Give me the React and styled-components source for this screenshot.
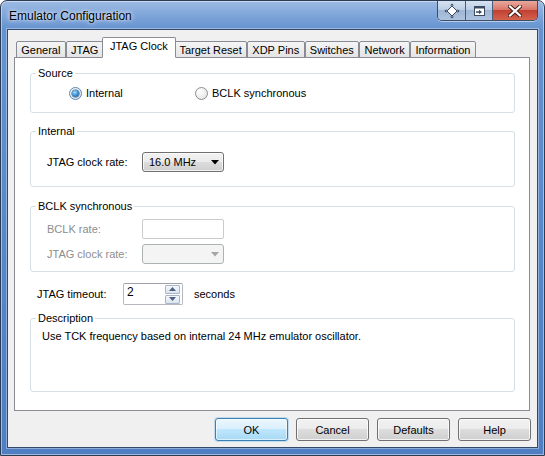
import React from "react";
import styled, { createGlobalStyle, css } from "styled-components";

const GlobalStyle = createGlobalStyle`
  html, body {
    margin: 0;
    padding: 0;
    background: #ffffff;
  }

  body {
    font-family: "Liberation Sans", Arial, sans-serif;
    font-size: 11px;
    color: #000;
  }

  * {
    box-sizing: border-box;
  }
`;

const TABS = [
  "General",
  "JTAG",
  "JTAG Clock",
  "Target Reset",
  "XDP Pins",
  "Switches",
  "Network",
  "Information",
];

function MoveIcon() {
  return (
    <svg width="16" height="16" viewBox="0 0 16 16">
      <path d="M8 3 L13 8 L8 13 L3 8 Z" fill="#fff" stroke="#3a4a60" strokeWidth="1" />
      <path d="M8 0.5 L10 2.5 L6 2.5 Z" fill="#3a4a60" />
      <path d="M8 15.5 L10 13.5 L6 13.5 Z" fill="#3a4a60" />
      <path d="M0.5 8 L2.5 6 L2.5 10 Z" fill="#3a4a60" />
      <path d="M15.5 8 L13.5 6 L13.5 10 Z" fill="#3a4a60" />
    </svg>
  );
}

function DockIcon() {
  return (
    <svg width="14" height="12" viewBox="0 0 14 12">
      <rect x="2.5" y="1.5" width="10" height="9" fill="#fff" stroke="#3a4a60" />
      <rect x="2.5" y="1.5" width="10" height="2" fill="#3a4a60" />
      <path d="M4 7 H8" stroke="#3a4a60" strokeWidth="1.6" />
      <path d="M7 4.8 L10 7 L7 9.2 Z" fill="#3a4a60" />
    </svg>
  );
}

function CloseIcon() {
  return (
    <svg width="14" height="12" viewBox="0 0 14 12">
      <path
        d="M2 1.5 L12 10.5 M12 1.5 L2 10.5"
        stroke="#3b1c18"
        strokeWidth="4"
        strokeLinecap="square"
      />
      <path
        d="M2 1.5 L12 10.5 M12 1.5 L2 10.5"
        stroke="#ffffff"
        strokeWidth="2.2"
        strokeLinecap="square"
      />
    </svg>
  );
}

function DropArrow({ disabled }) {
  return (
    <svg width="8" height="5" viewBox="0 0 8 5">
      <path d="M0 0 H8 L4 4.5 Z" fill={disabled ? "#a6a6a6" : "#000"} />
    </svg>
  );
}

function SpinArrow({ up }) {
  return (
    <svg width="7" height="4" viewBox="0 0 7 4">
      <path d={up ? "M0 4 H7 L3.5 0 Z" : "M0 0 H7 L3.5 4 Z"} fill="#4d6185" />
    </svg>
  );
}

export default function App() {
  return (
    <>
      <GlobalStyle />
      <Window>
        <TitleBar>
          <Title>Emulator Configuration</Title>
          <CaptionButtons>
            <CaptionButton>
              <MoveIcon />
            </CaptionButton>
            <CaptionButton>
              <DockIcon />
            </CaptionButton>
            <CaptionButton $close>
              <CloseIcon />
            </CaptionButton>
          </CaptionButtons>
        </TitleBar>

        <Client>
          <TabStrip>
            {TABS.map((t) => (
              <Tab key={t} $active={t === "JTAG Clock"}>
                {t}
              </Tab>
            ))}
          </TabStrip>

          <Panel>
            <GroupBox>
              <Legend>Source</Legend>
              <RadioRow>
                <RadioOption>
                  <Radio $checked />
                  Internal
                </RadioOption>
                <RadioOption>
                  <Radio />
                  BCLK synchronous
                </RadioOption>
              </RadioRow>
            </GroupBox>

            <GroupBox $top={11}>
              <Legend>Internal</Legend>
              <FieldRows $pt={14} $pb={14}>
                <FieldRow>
                  <FieldLabel>JTAG clock rate:</FieldLabel>
                  <Combo>
                    <span>16.0 MHz</span>
                    <DropArrow />
                  </Combo>
                </FieldRow>
              </FieldRows>
            </GroupBox>

            <GroupBox $top={12}>
              <Legend>BCLK synchronous</Legend>
              <FieldRows $pt={6} $pb={7}>
                <FieldRow>
                  <FieldLabel $disabled>BCLK rate:</FieldLabel>
                  <EditBox $disabled />
                </FieldRow>
                <FieldRow>
                  <FieldLabel $disabled>JTAG clock rate:</FieldLabel>
                  <Combo $disabled>
                    <span />
                    <DropArrow disabled />
                  </Combo>
                </FieldRow>
              </FieldRows>
            </GroupBox>

            <TimeoutRow>
              <TimeoutLabel>JTAG timeout:</TimeoutLabel>
              <Spinner>
                <SpinValue>2</SpinValue>
                <SpinButtons>
                  <SpinButton>
                    <SpinArrow up />
                  </SpinButton>
                  <SpinButton>
                    <SpinArrow />
                  </SpinButton>
                </SpinButtons>
              </Spinner>
              <Unit>seconds</Unit>
            </TimeoutRow>

            <GroupBox $top={6}>
              <Legend>Description</Legend>
              <Description>
                Use TCK frequency based on internal 24 MHz emulator oscillator.
              </Description>
            </GroupBox>
          </Panel>

          <ButtonRow>
            <DialogButton $default>OK</DialogButton>
            <DialogButton>Cancel</DialogButton>
            <DialogButton>Defaults</DialogButton>
            <DialogButton>Help</DialogButton>
          </ButtonRow>
        </Client>
      </Window>
    </>
  );
}

const Window = styled.div`
  width: 545px;
  height: 456px;
  display: flex;
  flex-direction: column;
  padding: 0 6px 7px 6px;
  border: 1px solid #2b3c55;
  border-radius: 7px 7px 0 0;
  background: linear-gradient(
    to bottom,
    #9dbbe4 0px,
    #7fa5d9 14px,
    #6693d0 28px,
    #5686c8 60%,
    #4f7fc2 100%
  );
  box-shadow: inset 0 0 0 1px rgba(255, 255, 255, 0.45);
`;

const TitleBar = styled.div`
  height: 28px;
  display: flex;
  align-items: flex-start;
  justify-content: space-between;
`;

const Title = styled.div`
  padding: 8px 0 0 2px;
  font-size: 12px;
  color: #000;
  text-shadow: 0 0 6px rgba(255, 255, 255, 0.9), 0 0 3px rgba(255, 255, 255, 0.8);
`;

const CaptionButtons = styled.div`
  display: flex;
  margin-right: 0px;
  height: 20px;
  border: 1px solid #3d4e69;
  border-top: none;
  border-radius: 0 0 5px 5px;
  overflow: hidden;
  box-shadow: 0 1px 0 rgba(255, 255, 255, 0.5);
`;

const CaptionButton = styled.div`
  width: 27px;
  height: 100%;
  display: flex;
  align-items: center;
  justify-content: center;
  border-left: 1px solid #4a5d7c;
  background: linear-gradient(
    to bottom,
    #d6e2f1 0%,
    #bccee6 45%,
    #9fb6d5 50%,
    #aec4df 100%
  );

  &:first-child {
    border-left: none;
  }

  ${(p) =>
    p.$close &&
    css`
      width: 45px;
      background: linear-gradient(
        to bottom,
        #e9a99c 0%,
        #d9786a 45%,
        #c24132 50%,
        #d4624f 100%
      );
    `}
`;

const Client = styled.div`
  flex: 1;
  display: flex;
  flex-direction: column;
  padding: 7px 7px 0 6px;
  background: #f0f0f0;
  border: 1px solid #34486a;
  box-shadow: 0 0 0 1px rgba(255, 255, 255, 0.35);
`;

const TabStrip = styled.div`
  height: 21px;
  display: flex;
  align-items: flex-end;
  padding-left: 2px;
  margin-bottom: -1px;
  position: relative;
  z-index: 1;
`;

const Tab = styled.div`
  height: 17px;
  padding: 0 4.3px;
  display: flex;
  align-items: center;
  border: 1px solid #898c95;
  border-radius: 2px 2px 0 0;
  background: linear-gradient(to bottom, #f5f5f5, #e4e4e4);
  white-space: nowrap;

  ${(p) =>
    p.$active &&
    css`
      height: 21px;
      padding: 0 7.3px 3px;
      margin: 0 -2px;
      background: #ffffff;
      border-bottom-color: #ffffff;
      position: relative;
      z-index: 2;
    `}
`;

const Panel = styled.div`
  height: 354px;
  display: flex;
  flex-direction: column;
  padding: 8px 14px 0 15px;
  background: #ffffff;
  border: 1px solid #898c95;
`;

const GroupBox = styled.fieldset`
  margin: ${(p) => p.$top || 0}px 0 0 0;
  padding: 0;
  min-width: 0;
  border: 1px solid #d5dfe5;
  border-radius: 3px;
`;

const Legend = styled.legend`
  margin-left: 5px;
  padding: 0 2px;
  line-height: 14px;
  font-size: 11px;
`;

const RadioRow = styled.div`
  height: 26px;
  margin-bottom: 6px;
  display: flex;
  align-items: center;
  padding-left: 38px;
`;

const RadioOption = styled.label`
  width: 126px;
  display: flex;
  align-items: center;
  gap: 4px;
  white-space: nowrap;
`;

const Radio = styled.span`
  width: 13px;
  height: 13px;
  flex: none;
  border-radius: 50%;
  border: 1px solid #8e8f8f;
  background: radial-gradient(circle at 35% 30%, #ffffff 0%, #ececec 60%, #d6d6d6 100%);
  display: flex;
  align-items: center;
  justify-content: center;

  ${(p) =>
    p.$checked &&
    css`
      border-color: #5c86b0;
      &::after {
        content: "";
        width: 7px;
        height: 7px;
        border-radius: 50%;
        background: radial-gradient(
          circle at 40% 35%,
          #a9e1fb 0%,
          #3f94d4 45%,
          #17528f 100%
        );
        box-shadow: 0 0 0 0.5px #1d4f7f;
      }
    `}
`;

const FieldRows = styled.div`
  display: flex;
  flex-direction: column;
  gap: 5px;
  padding: ${(p) => p.$pt}px 0 ${(p) => p.$pb}px 16px;
`;

const FieldRow = styled.div`
  height: 20px;
  display: flex;
  align-items: center;
`;

const FieldLabel = styled.span`
  width: 95px;
  color: ${(p) => (p.$disabled ? "#8d8d8d" : "#000")};
`;

const Combo = styled.div`
  width: 82px;
  height: 20px;
  display: flex;
  align-items: center;
  justify-content: space-between;
  padding: 0 4px 0 6px;
  border: 1px solid #707070;
  border-radius: 3px;
  background: linear-gradient(
    to bottom,
    #f2f2f2 0%,
    #ebebeb 50%,
    #dddddd 50%,
    #cfcfcf 100%
  );
  box-shadow: inset 0 0 0 1px rgba(255, 255, 255, 0.7);

  ${(p) =>
    p.$disabled &&
    css`
      border-color: #adb2b5;
      background: #f4f4f4;
      box-shadow: none;
    `}
`;

const EditBox = styled.div`
  width: 82px;
  height: 20px;
  border: 1px solid #c9cbcf;
  border-radius: 2px;
  background: #ffffff;
`;

const TimeoutRow = styled.div`
  height: 22px;
  margin-top: 11px;
  display: flex;
  align-items: center;
  padding-left: 7px;
`;

const TimeoutLabel = styled.span`
  width: 86px;
`;

const Spinner = styled.div`
  width: 60px;
  height: 22px;
  display: flex;
  align-items: center;
  justify-content: space-between;
  padding: 0 2px 0 3px;
  border: 1px solid #b5b8be;
  border-top-color: #9ea2a8;
  border-radius: 2px;
  background: #ffffff;
`;

const SpinValue = styled.span`
  align-self: flex-start;
  padding-top: 1px;
  font-size: 12px;
`;

const SpinButtons = styled.div`
  display: flex;
  flex-direction: column;
  gap: 1px;
`;

const SpinButton = styled.div`
  width: 15px;
  height: 9px;
  display: flex;
  align-items: center;
  justify-content: center;
  border: 1px solid #a9b6c8;
  border-radius: 1px;
  background: linear-gradient(to bottom, #f4f7fb, #dbe4f0);
`;

const Unit = styled.span`
  margin-left: 11px;
`;

const Description = styled.div`
  min-height: 66px;
  padding: 4px 0 0 11px;
  line-height: 14px;
`;

const ButtonRow = styled.div`
  display: flex;
  justify-content: flex-end;
  gap: 8px;
  margin: 7px -1px 0 0;
`;

const DialogButton = styled.div`
  width: 73px;
  height: 23px;
  display: flex;
  align-items: center;
  justify-content: center;
  border: 1px solid #707070;
  border-radius: 3px;
  background: linear-gradient(
    to bottom,
    #f2f2f2 0%,
    #ebebeb 50%,
    #dddddd 50%,
    #cfcfcf 100%
  );
  box-shadow: inset 0 0 0 1px rgba(255, 255, 255, 0.75);

  ${(p) =>
    p.$default &&
    css`
      border-color: #3c7fb1;
      background: linear-gradient(
        to bottom,
        #eaf6fd 0%,
        #d9f0fc 50%,
        #bee6fd 50%,
        #a7d9f5 100%
      );
      box-shadow: inset 0 0 0 1px rgba(255, 255, 255, 0.6),
        0 0 0 1px rgba(100, 180, 240, 0.35);
    `}
`;
